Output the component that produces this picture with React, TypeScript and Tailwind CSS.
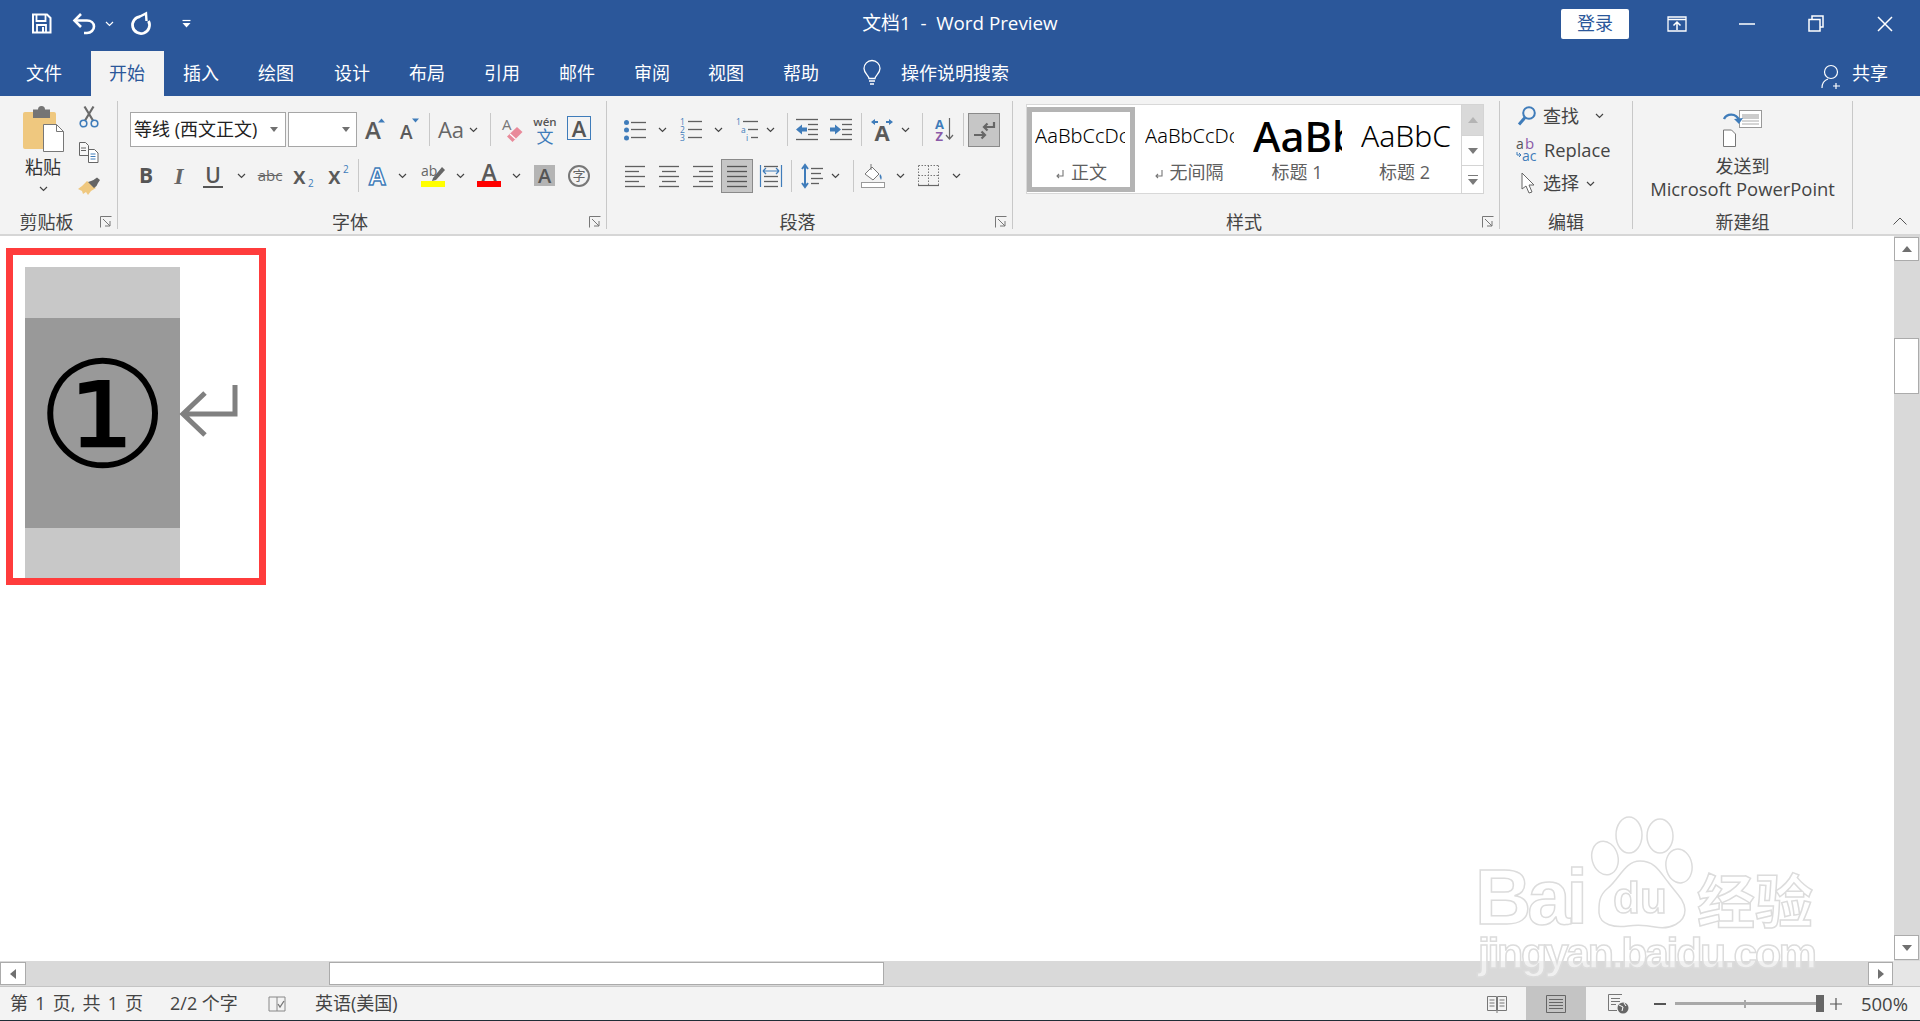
import React from "react";

const G = "#5a5a5a";
const B = "#3f7cba";
const SANS = "Open Sans, Noto Sans CJK SC, sans-serif";

function S({ c, children }: { c: string; children?: React.ReactNode }) {
  return <div className={`flex shrink-0 items-center justify-center ${c}`}>{children}</div>;
}
const Chev = ({ color = "#444" }: { color?: string }) => (
  <svg width="9" height="6" viewBox="0 0 9 6" className="shrink-0"><path d="M1 1l3.5 3.5L8 1" stroke={color} strokeWidth="1.2" fill="none" /></svg>
);
const Sep = ({ h = "h-[33px]" }: { h?: string }) => <div className={`w-px bg-[#c8c8c8] ${h}`} />;
const Caret = () => (
  <svg width="10" height="6" viewBox="0 0 10 6" className="shrink-0"><path d="M1 0h8L5 5z" fill="#707070" /></svg>
);
const Launcher = () => (
  <svg width="12" height="12" viewBox="0 0 12 12" className="shrink-0"><path d="M.5 11.5V.5h11M3 3l7 7M10 5v5H5" stroke="#777" fill="none" strokeWidth="1" /></svg>
);
function Lines({ rows, w = 22, h = 22, color = "#606060", extra }: { rows: [number, number, number][]; w?: number; h?: number; color?: string; extra?: React.ReactNode }) {
  return (
    <svg width={w} height={h} viewBox={`0 0 ${w} ${h}`} className="shrink-0">
      {rows.map(([x1, x2, y], i) => <path key={i} d={`M${x1} ${y + 0.5}H${x2}`} stroke={color} strokeWidth="1.3" />)}
      {extra}
    </svg>
  );
}

function GroupLabel({ text, launcher }: { text: string; launcher?: boolean }) {
  return (
    <div className="mt-auto -mb-[3px] flex h-[20px] items-center text-[18px] leading-[20px] text-[#444]">
      <span className="grow text-center">{text}</span>
      {launcher ? <span className="flex w-[24px] justify-end pr-[5px]"><Launcher /></span> : null}
    </div>
  );
}

function TitleBar() {
  return (
    <div className="grid h-[51px] grid-cols-[1fr_auto_1fr] items-center pb-[4px] text-white">
      <div className="flex items-center pl-[31px]">
        <svg width="21" height="21" viewBox="0 0 21 21" className="shrink-0"><path d="M2 1.500h14l3.500 3.500v14.500h-17.500z" fill="none" stroke="#fff" strokeWidth="2" /><path d="M5.500 2v6h9V2M6 19v-7h9v7" fill="none" stroke="#fff" strokeWidth="1.800" /><path d="M11 14h2v5h-2z" fill="#fff" /></svg>
        <S c="w-[22px] ml-[21px]">
          <svg width="23" height="22" viewBox="0 0 23 22"><path d="M8 1L1.500 7.500 8 14" fill="none" stroke="#fff" strokeWidth="2.600" /><path d="M2 7.500h12c4 0 7 2.500 7 6s-3 6.500-7 6.500h-3" fill="none" stroke="#fff" strokeWidth="2.600" /></svg>
        </S>
        <S c="w-[9px] ml-[10px]"><Chev color="#fff" /></S>
        <S c="w-[20px] ml-[17px]">
          <svg width="21" height="23" viewBox="0 0 21 23"><path d="M9 4.600A8.500 8.500 0 1 0 17.500 9" fill="none" stroke="#fff" strokeWidth="2.800" /><path d="M8.500 4.800L15 1.500 15.500 9" fill="none" stroke="#fff" strokeWidth="2.400" /></svg>
        </S>
        <S c="w-[9px] ml-[31px]">
          <svg width="9" height="9" viewBox="0 0 9 9"><path d="M.5 1.500h8" stroke="#fff" strokeWidth="1.200" /><path d="M.5 4h8L4.500 8.500z" fill="#fff" /></svg>
        </S>
      </div>
      <div className="whitespace-pre text-[18.8px]">文档1  -  Word Preview</div>
      <div className="flex items-center justify-end pr-[13px]">
        <div className="flex h-[30px] w-[68px] items-center justify-center rounded-[2px] bg-white text-[18px] text-[#2b579a]">登录</div>
        <S c="w-[96px]">
          <svg width="20" height="16" viewBox="0 0 20 16"><path d="M1 1h18v14H1zM1 3.500h18" fill="none" stroke="#fff" strokeWidth="1.300" /><path d="M10 14V7M6.500 9.500L10 6l3.500 3.500" fill="none" stroke="#fff" strokeWidth="1.500" /></svg>
        </S>
        <S c="w-[44px]"><svg width="16" height="2" viewBox="0 0 16 2"><path d="M0 1h16" stroke="#fff" strokeWidth="1.500" /></svg></S>
        <S c="w-[94px]">
          <svg width="16" height="17" viewBox="0 0 16 17"><path d="M1 4.500h11v11.500H1zM4 4V1h11v11h-3" fill="none" stroke="#fff" strokeWidth="1.500" /></svg>
        </S>
        <S c="w-[44px]"><svg width="16" height="16" viewBox="0 0 16 16"><path d="M1 1l14 14M15 1L1 15" stroke="#fff" strokeWidth="1.500" /></svg></S>
      </div>
    </div>
  );
}

function Tab({ c, t }: { c: string; t: string }) {
  return <S c={c}>{t}</S>;
}

function TabRow() {
  return (
    <div className="flex h-[45px] items-center text-[18px] text-white">
      <Tab c="w-[91px] pr-[3px]" t="文件" />
      <div className="flex h-[45px] w-[73px] items-center justify-center bg-[#f3f3f3] pr-[1px] text-[#2b579a]">开始</div>
      <Tab c="w-[74px]" t="插入" />
      <Tab c="w-[76px]" t="绘图" />
      <Tab c="w-[76px]" t="设计" />
      <Tab c="w-[74px]" t="布局" />
      <Tab c="w-[76px]" t="引用" />
      <Tab c="w-[74px]" t="邮件" />
      <Tab c="w-[76px]" t="审阅" />
      <Tab c="w-[72px]" t="视图" />
      <Tab c="w-[78px]" t="帮助" />
      <S c="w-[18px] ml-[23px]">
        <svg width="18" height="25" viewBox="0 0 18 25"><path d="M6 17.500c0-3-5-5-5-10a8 8 0 0 1 16 0c0 5-5 7-5 10z" fill="none" stroke="#fff" strokeWidth="1.300" /><path d="M6 20h6M7 23h4" stroke="#fff" strokeWidth="1.600" /></svg>
      </S>
      <div className="ml-[20px]">操作说明搜索</div>
      <div className="ml-auto flex items-center pr-[32px]">
        <svg width="22" height="25" viewBox="0 0 22 25" className="mt-[5px] mr-[9px] shrink-0"><circle cx="10" cy="8" r="6.500" fill="none" stroke="#fff" strokeWidth="1.200" /><path d="M1 24c0-5 3-8 6-9M15 19v6M12 22h7" fill="none" stroke="#fff" strokeWidth="1.200" /></svg>
        <span>共享</span>
      </div>
    </div>
  );
}

const ClipboardGroup = () => (
  <div className="flex h-[128px] w-[118px] shrink-0 flex-col border-r border-[#c8c8c8]">
    <div className="flex h-[103px]">
      <div className="ml-[8px] flex w-[70px] flex-col items-center pt-[6px]">
        <svg width="41" height="45" viewBox="0 0 41 45" className="shrink-0">
          <rect x="0" y="5" width="33" height="37" rx="2" fill="#efc87f" />
          <path d="M15 2.500a3.500 3.500 0 0 1 7 0h5v8.500H10V2.500z" fill="#757575" />
          <path d="M20.500 17.500h13l7 7v20h-20z" fill="#fff" stroke="#777" strokeWidth="1" />
          <path d="M33.500 17.500v7h7" fill="none" stroke="#777" strokeWidth="1" />
        </svg>
        <div className="mt-[3px] h-[25px] text-[18px] leading-[25px] text-[#333]">粘贴</div>
        <div className="mt-[6px]"><Chev /></div>
      </div>
      <div className="flex w-[22px] flex-col items-center pt-[5px]">
        <svg width="20" height="22" viewBox="0 0 20 22" className="shrink-0"><path d="M14.500 0.500L6 14.500M5.500 0.500L14 14.500" stroke="#6a6a6a" strokeWidth="2.200" /><circle cx="4.500" cy="17.500" r="3.300" fill="none" stroke={B} strokeWidth="1.600" /><circle cx="15.500" cy="17.500" r="3.300" fill="none" stroke={B} strokeWidth="1.600" /></svg>
        <svg width="20" height="21" viewBox="0 0 20 21" className="mt-[14px] shrink-0"><path d="M.5.500h6l3 3v10h-9z" fill="#f8f8f8" stroke="#666" /><path d="M2 6h5M2 8.500h5" stroke="#666" /><path d="M9.500 7.500h6l3.500 3.500v9.500h-9.500z" fill="#fff" stroke="#666" /><path d="M11.500 12h5M11.500 14.500h5M11.500 17h5" stroke={B} /></svg>
        <svg width="23" height="20" viewBox="0 0 23 20" className="mt-[14px] shrink-0"><path d="M9 4l9 7-5 3-3 4-2-3-3 2-1-3-4-2 4-3z" fill="#efc87f" /><path d="M10 5l3-1 2.500-1L19 .5l3 2.500-2 3-1.500 3-2.500 2z" fill="#646464" /></svg>
      </div>
    </div>
    <GroupLabel text="剪贴板" launcher />
  </div>
);

const FontGroup = () => (
  <div className="flex h-[128px] w-[489px] shrink-0 flex-col border-r border-[#c8c8c8]">
    <div className="mt-[11px] flex h-[35px] pl-[12px]">
      <div className="flex h-[35px] w-[156px] items-center border border-[#a6a6a6] bg-white pl-[3px] pr-[6px] text-[18px] text-[#222]">
        <span className="grow whitespace-nowrap">等线 (西文正文)</span><Caret />
      </div>
      <div className="ml-[2px] flex h-[35px] w-[69px] items-center justify-end border border-[#a6a6a6] bg-white pr-[5px]"><Caret /></div>
      <S c="w-[34px]">
        <svg width="30" height="30" viewBox="0 0 30 30"><text x="6" y="23.500" fontSize="24" fontWeight="600" fontFamily={SANS} fill={G}>A</text><path d="M19 7.500l3.500-4 3.500 4z" fill={B} /></svg>
      </S>
      <S c="w-[32px]">
        <svg width="26" height="30" viewBox="0 0 26 30"><text x="6" y="23.500" fontSize="19" fontWeight="600" fontFamily={SANS} fill={G}>A</text><path d="M18 3.500h7L21.500 7.500z" fill={B} /></svg>
      </S>
      <S c="w-[12px]"><Sep /></S>
      <S c="w-[32px] text-[22px] text-[#666]">Aa</S>
      <S c="w-[12px]"><Chev /></S>
      <S c="w-[22px]"><Sep /></S>
      <S c="w-[22px]">
        <svg width="22" height="26" viewBox="0 0 22 26"><text x="1" y="13" fontSize="15" fontFamily={SANS} fill="#777">A</text><path d="M6 19.500l10-9.500 5.500 5-10 10z" fill="#e98a9a" /><path d="M9 17l5.500 5" stroke="#fff" strokeWidth="1.200" /></svg>
      </S>
      <S c="w-[44px]">
        <svg width="24" height="28" viewBox="0 0 24 28"><text x="12" y="10" textAnchor="middle" fontSize="11.500" fontWeight="600" fontFamily={SANS} fill="#555">wén</text><text x="12" y="27" textAnchor="middle" fontSize="17" fontFamily="Noto Sans CJK SC" fill={B}>文</text></svg>
      </S>
      <div className="mt-[4px] flex h-[24px] w-[24px] items-center justify-center border border-[#3f7cba] text-[22px] font-semibold leading-none text-[#555]">A</div>
    </div>
    <div className="mt-[11px] flex h-[35px] pl-[12px] text-[#555]">
      <S c="w-[32px] text-[21px] font-bold">B</S>
      <S c="w-[34px] font-['Liberation_Serif',serif] text-[24px] font-bold italic text-[#666]">I</S>
      <S c="w-[34px] flex-col text-[21px] font-semibold leading-[22px]"><span className="border-b-[2px] border-[#555] px-[2px]">U</span></S>
      <S c="w-[22px]"><Chev /></S>
      <S c="w-[36px] text-[15px] text-[#666] line-through">abc</S>
      <S c="w-[34px]"><svg width="24" height="24" viewBox="0 0 24 24"><text x="0" y="20" fontSize="23" fontWeight="600" fontFamily={SANS} fill={G}>x</text><text x="15" y="23" fontSize="10" fontFamily={SANS} fill={B}>2</text></svg></S>
      <S c="w-[28px] ml-[4px]"><svg width="24" height="24" viewBox="0 0 24 24"><text x="0" y="20" fontSize="23" fontWeight="600" fontFamily={SANS} fill={G}>x</text><text x="15" y="9" fontSize="10" fontFamily={SANS} fill={B}>2</text></svg></S>
      <S c="w-[8px]"><Sep /></S>
      <S c="w-[32px]"><svg width="24" height="26" viewBox="0 0 24 26"><text x="3" y="22" fontSize="24" fontWeight="700" fontFamily={SANS} fill="#fff" stroke={B} strokeWidth="1.400">A</text></svg></S>
      <S c="w-[16px]"><Chev /></S>
      <S c="w-[24px] ml-[11px]"><svg width="24" height="26" viewBox="0 0 24 26"><text x="0" y="13" fontSize="14" fontFamily={SANS} fill="#666">ab</text><path d="M12 15l9-11 3 3-9 10-4 1z" fill="#666" /><rect x="0" y="18" width="24" height="6" fill="#ffff00" /></svg></S>
      <S c="w-[16px] ml-[7px]"><Chev /></S>
      <S c="w-[24px] ml-[9px]"><svg width="24" height="26" viewBox="0 0 24 26"><text x="12" y="18" textAnchor="middle" fontSize="23" fontWeight="600" fontFamily={SANS} fill={G}>A</text><rect x="0" y="18" width="24" height="6" fill="#ff0000" /></svg></S>
      <S c="w-[16px] ml-[7px]"><Chev /></S>
      <S c="ml-[10px] w-[21px]"><div className="flex h-[21px] w-[21px] items-center justify-center bg-[#b4b4b4] text-[20px] font-semibold leading-none text-[#555]">A</div></S>
      <S c="ml-[13px] w-[22px]"><div className="flex h-[22px] w-[22px] items-center justify-center rounded-full border-[2px] border-[#777] text-[13px] leading-none text-[#666]">字</div></S>
    </div>
    <GroupLabel text="字体" launcher />
  </div>
);

const Bul = (
  <Lines w={22} h={22} rows={[[7, 22, 3], [7, 22, 10], [7, 22, 18]]} extra={<g fill={B}><circle cx="2.500" cy="3.500" r="2.500" /><circle cx="2.500" cy="11" r="2.500" /><circle cx="2.500" cy="19" r="2.500" /></g>} />
);
const NumT = ({ x, y, t }: { x: number; y: number; t: string }) => <text x={x} y={y} fontSize="8.500" fontFamily={SANS} fill={B}>{t}</text>;

const ParaGroup = () => (
  <div className="flex h-[128px] w-[406px] shrink-0 flex-col border-r border-[#c8c8c8]">
    <div className="mt-[11px] flex h-[35px] items-center pl-[17px]">
      <S c="w-[22px]">{Bul}</S>
      <S c="ml-[10px] w-[12px]"><Chev /></S>
      <S c="ml-[12px] w-[22px]"><Lines w={22} h={24} rows={[[8, 22, 3], [8, 22, 11], [8, 22, 19]]} extra={<><NumT x={0} y={7} t="1" /><NumT x={0} y={15} t="2" /><NumT x={0} y={23} t="3" /></>} /></S>
      <S c="ml-[10px] w-[12px]"><Chev /></S>
      <S c="ml-[12px] w-[22px]"><Lines w={22} h={24} rows={[[7, 22, 3], [12, 22, 11], [15, 22, 19]]} extra={<><NumT x={0} y={7} t="1" /><NumT x={5} y={15} t="a" /><NumT x={10} y={23} t="i" /></>} /></S>
      <S c="ml-[6px] w-[12px]"><Chev /></S>
      <S c="ml-[10px] w-[2px]"><Sep /></S>
      <S c="ml-[8px] w-[22px]"><Lines w={22} h={23} rows={[[0, 22, 1], [12, 22, 6], [12, 22, 11], [12, 22, 16], [0, 22, 21]]} extra={<path d="M0 11.500l6-5v3h5v4H6v3z" fill={B} />} /></S>
      <S c="ml-[12px] w-[22px]"><Lines w={22} h={23} rows={[[0, 22, 1], [12, 22, 6], [12, 22, 11], [12, 22, 16], [0, 22, 21]]} extra={<path d="M11 11.500l-6-5v3H0v4h5v3z" fill={B} />} /></S>
      <S c="ml-[8px] w-[2px]"><Sep /></S>
      <S c="ml-[9px] w-[22px]"><svg width="22" height="24" viewBox="0 0 22 24"><text x="11" y="23" textAnchor="middle" fontSize="22" fontWeight="700" fontFamily={SANS} fill={G}>A</text><path d="M0 4l4-3v2h3v2H4v2zM22 4l-4-3v2h-3v2h3v2z" fill={B} /></svg></S>
      <S c="ml-[6px] w-[12px]"><Chev /></S>
      <S c="ml-[10px] w-[2px]"><Sep /></S>
      <S c="ml-[12px] w-[18px]"><svg width="19" height="24" viewBox="0 0 19 24"><text x="0" y="11" fontSize="13" fontWeight="700" fontFamily={SANS} fill={B}>A</text><text x="0.500" y="23" fontSize="13" fontWeight="700" fontFamily={SANS} fill="#8a5aa8">Z</text><path d="M14.500 0v21M11 17l3.500 4 3.500-4" fill="none" stroke="#666" strokeWidth="1.200" /></svg></S>
      <S c="ml-[9px] w-[2px]"><Sep /></S>
      <S c="ml-[4px] h-[34px] w-[32px] border border-[#8a8a8a] bg-[#c6c6c6]">
        <svg width="26" height="22" viewBox="0 0 26 22"><path d="M23 3v5H13M16.500 4.500L13 8l3.500 3.500" fill="none" stroke="#666" strokeWidth="2.200" /><path d="M3 16h11M10.500 12.500L14 16l-3.500 3.500" fill="none" stroke="#666" strokeWidth="2.200" /></svg>
      </S>
    </div>
    <div className="mt-[11px] flex h-[35px] items-center pl-[18px]">
      <S c="w-[20px]"><Lines w={20} h={22} rows={[[0, 20, 1], [0, 14, 6], [0, 20, 11], [0, 14, 16], [0, 20, 21]]} /></S>
      <S c="ml-[14px] w-[20px]"><Lines w={20} h={22} rows={[[0, 20, 1], [3, 17, 6], [0, 20, 11], [3, 17, 16], [0, 20, 21]]} /></S>
      <S c="ml-[14px] w-[20px]"><Lines w={20} h={22} rows={[[0, 20, 1], [6, 20, 6], [0, 20, 11], [6, 20, 16], [0, 20, 21]]} /></S>
      <S c="ml-[8px] h-[34px] w-[32px] border border-[#8a8a8a] bg-[#c6c6c6]"><Lines w={20} h={22} color="#555" rows={[[0, 20, 1], [0, 20, 6], [0, 20, 11], [0, 20, 16], [0, 20, 21]]} /></S>
      <S c="ml-[7px] w-[22px]"><Lines w={22} h={22} rows={[[4, 18, 1], [4, 18, 11], [4, 18, 16], [4, 18, 21]]} extra={<path d="M.500 0v22M21.500 0v22M3 6h16M3 6l3-3M3 6l3 3M19 6l-3-3M19 6l-3 3" fill="none" stroke={B} strokeWidth="1.200" />} /></S>
      <S c="ml-[8px] w-[2px]"><Sep h="h-[32px]" /></S>
      <S c="ml-[9px] w-[22px]"><Lines w={22} h={24} rows={[[10, 22, 4], [10, 20, 9], [10, 22, 14], [10, 18, 19]]} extra={<path d="M4 1v22M1 5l3-4 3 4M1 19l3 4 3-4" fill="none" stroke={B} strokeWidth="2" />} /></S>
      <S c="ml-[6px] w-[12px]"><Chev /></S>
      <S c="ml-[11px] w-[2px]"><Sep h="h-[32px]" /></S>
      <S c="ml-[7px] w-[24px]"><svg width="24" height="26" viewBox="0 0 24 26"><path d="M4 11L11 4l7 7-6 6z" fill="#fff" stroke="#777" /><path d="M10 1v6" stroke="#777" /><path d="M19 11c2 2 2 4 1 6-1-2-2-4-1-6z" fill={B} /><rect x=".500" y="19.500" width="23" height="5" fill="#fff" stroke="#999" /></svg></S>
      <S c="ml-[9px] w-[12px]"><Chev /></S>
      <S c="ml-[12px] w-[21px]"><svg width="21" height="21" viewBox="0 0 21 21"><path d="M.5.5h20M.5.5v20M20.500.5v20M10.500.5v20M.5 10.500h20" stroke="#777" strokeDasharray="1.500 1.500" fill="none" /><path d="M0 20.500h21" stroke="#666" strokeWidth="1.200" /></svg></S>
      <S c="ml-[11px] w-[12px]"><Chev /></S>
    </div>
    <GroupLabel text="段落" launcher />
  </div>
);

const Ret = () => (
  <svg width="10" height="10" viewBox="0 0 10 10" className="mr-[6px] mt-[3px] shrink-0"><path d="M8 1v6H2M4 5L2 7l2 2" fill="none" stroke="#777" strokeWidth="1.100" /></svg>
);
const StyleLabel = ({ t, ret }: { t: string; ret?: boolean }) => (
  <div className="mt-[1px] flex h-[24px] items-center justify-center text-[18px] leading-[24px] text-[#606060]">{ret ? <Ret /> : null}{t}</div>
);
const Tri = ({ up, color }: { up?: boolean; color: string }) => (
  <svg width="10" height="6" viewBox="0 0 10 6"><path d={up ? "M0 6h10L5 0z" : "M0 0h10L5 6z"} fill={color} /></svg>
);

const StylesGroup = () => (
  <div className="flex h-[128px] w-[487px] shrink-0 flex-col border-r border-[#c8c8c8]">
    <div className="ml-[13px] mt-[3px] flex h-[90px] w-[458px]">
      <div className="flex h-[90px] w-[435px] border-y border-l border-[#d8d8d8] bg-white font-['Noto_Sans',sans-serif]">
        <div className="mt-[2px] flex h-[85px] w-[108px] shrink-0 flex-col border-[5px] border-[#b4b4b4] bg-white">
          <div className="mx-[3px] mt-[1px] h-[46px] w-[90px] overflow-hidden whitespace-nowrap text-[20px] font-light leading-[46px] text-black">AaBbCcDc</div>
          <div className="font-['Open_Sans','Noto_Sans_CJK_SC',sans-serif]"><StyleLabel t="正文" ret /></div>
        </div>
        <div className="mt-[2px] flex h-[85px] w-[109px] shrink-0 flex-col pl-[10px]">
          <div className="mt-[6px] h-[46px] w-[89px] overflow-hidden whitespace-nowrap text-[20px] font-light leading-[46px] text-black">AaBbCcDc</div>
          <div className="pr-[12px] font-['Open_Sans','Noto_Sans_CJK_SC',sans-serif]"><StyleLabel t="无间隔" ret /></div>
        </div>
        <div className="mt-[2px] flex h-[85px] w-[109px] shrink-0 flex-col pl-[9px]">
          <div className="mt-[5px] h-[47px] w-[89px] overflow-hidden whitespace-nowrap text-[42px] font-medium leading-[47px] text-black">AaBbCcDc</div>
          <div className="pr-[12px] font-['Open_Sans','Noto_Sans_CJK_SC',sans-serif]"><StyleLabel t="标题 1" /></div>
        </div>
        <div className="mt-[2px] flex h-[85px] w-[109px] shrink-0 flex-col pl-[8px]">
          <div className="mt-[6px] h-[46px] w-[91px] overflow-hidden whitespace-nowrap text-[30px] font-light leading-[46px] text-black">AaBbCcDc</div>
          <div className="pr-[14px] font-['Open_Sans','Noto_Sans_CJK_SC',sans-serif]"><StyleLabel t="标题 2" /></div>
        </div>
      </div>
      <div className="flex w-[23px] flex-col">
        <S c="h-[32px] border border-[#d4d4d4] bg-[#d9d9d9]"><Tri up color="#b4b4b4" /></S>
        <S c="h-[29px] border-x border-[#d4d4d4] bg-white"><Tri color="#7a7a7a" /></S>
        <S c="h-[29px] flex-col gap-[3px] border border-[#d4d4d4] bg-white"><div className="h-[1px] w-[10px] bg-[#7a7a7a]" /><Tri color="#7a7a7a" /></S>
      </div>
    </div>
    <GroupLabel text="样式" launcher />
  </div>
);

const EditGroup = () => (
  <div className="flex h-[128px] w-[133px] shrink-0 flex-col border-r border-[#c8c8c8] text-[18px] text-[#444]">
    <div className="-mt-[2px] flex h-[34px] items-center pl-[18px]">
      <svg width="18" height="20" viewBox="0 0 18 20" className="shrink-0"><circle cx="11" cy="7" r="5.800" fill="none" stroke={B} strokeWidth="2" /><path d="M7 11.500L1 18.500" stroke={B} strokeWidth="3" /></svg>
      <span className="ml-[7px]">查找</span>
      <span className="ml-[16px] flex"><Chev /></span>
    </div>
    <div className="flex h-[34px] items-center pl-[16px]">
      <svg width="22" height="24" viewBox="0 0 22 24" className="shrink-0"><text x="0" y="11" fontSize="14" fontFamily={SANS} fill="#555">a</text><text x="9" y="11" fontSize="15" fontFamily={SANS} fill="#8a5aa8">b</text><text x="6" y="23" fontSize="14" fontFamily={SANS} fill={B}>ac</text><path d="M1 14v3h4M3 15l2 2-2 2" fill="none" stroke={B} strokeWidth="1" /></svg>
      <span className="ml-[6px] text-[18.3px]">Replace</span>
    </div>
    <div className="flex h-[33px] items-center pl-[21px]">
      <svg width="15" height="23" viewBox="0 0 15 23" className="shrink-0"><path d="M1 1v16l4-3 3 7 3-1-3-7h5z" fill="#fff" stroke="#666" strokeWidth="1" /></svg>
      <span className="ml-[7px]">选择</span>
      <span className="ml-[7px] flex"><Chev /></span>
    </div>
    <GroupLabel text="编辑" />
  </div>
);

const NewGroup = () => (
  <div className="flex h-[128px] w-[220px] shrink-0 flex-col border-r border-[#c8c8c8] text-[18px] text-[#444]">
    <div className="flex h-[103px] flex-col items-center pt-[9px] leading-[22px]">
      <svg width="39" height="37" viewBox="0 0 39 37" className="shrink-0">
        <rect x="16.500" y=".5" width="22" height="17" fill="#fff" stroke="#999" /><rect x="19" y="4" width="17" height="5" fill="#ccc" /><path d="M19 11h17M19 14h17" stroke="#aaa" />
        <path d="M.5 20h8l4 4v12.500H.5z" fill="#fff" stroke="#777" />
        <path d="M1 9c3-6 12-6 15 1" fill="none" stroke={B} strokeWidth="2.400" /><path d="M11 9l5 5 4-6z" fill={B} />
      </svg>
      <div className="mt-[8px]">发送到</div>
      <div className="mt-[1px] whitespace-nowrap text-[18.4px]">Microsoft PowerPoint</div>
    </div>
    <GroupLabel text="新建组" />
  </div>
);

const Ribbon = () => (
  <div className="flex h-[140px] border-b-[2px] border-[#d6d6d6] bg-[#f3f3f3]">
    <div className="mt-[5px] flex h-[128px]">
      <ClipboardGroup />
      <FontGroup />
      <ParaGroup />
      <StylesGroup />
      <EditGroup />
      <NewGroup />
    </div>
    <div className="ml-auto mr-[13px] mt-[121px]">
      <svg width="14" height="8" viewBox="0 0 14 8"><path d="M.5 7.500L7 1l6.500 6.500" fill="none" stroke="#555" strokeWidth="1" /></svg>
    </div>
  </div>
);

const ScrollBtn = ({ c, children }: { c: string; children: React.ReactNode }) => (
  <div className={`flex shrink-0 items-center justify-center border border-[#ababab] bg-white ${c}`}>{children}</div>
);

const Document = () => (
  <div className="flex h-[725px]">
    <div className="grow bg-white pl-[6px] pt-[12px]">
      <div className="flex h-[337px] w-[260px] border-[7px] border-[#ff3c3c] bg-white pl-[12px] pt-[12px]">
        <div className="flex h-[311px] w-[155px] flex-col bg-[#c8c8c8]">
          <div className="mt-[51px] flex h-[210px] items-center justify-center bg-[#999] pb-[14px] font-['DejaVu_Sans','Noto_Sans_CJK_SC',sans-serif] text-[148px] leading-none text-black">①</div>
        </div>
        <svg width="60" height="54" viewBox="0 0 60 54" className="mt-[118px] shrink-0">
          <path d="M55 0v29H3M25 8L3 29l22 21" fill="none" stroke="#808080" strokeWidth="5" />
        </svg>
      </div>
    </div>
    <div className="flex w-[26px] flex-col bg-[#d9d9d9] pt-[1px]">
      <ScrollBtn c="h-[24px] w-[25px]"><Tri up color="#707070" /></ScrollBtn>
      <div className="mt-[77px] h-[56px] w-[25px] border border-[#ababab] bg-white" />
      <ScrollBtn c="mt-[541px] h-[25px] w-[25px]"><Tri color="#707070" /></ScrollBtn>
    </div>
  </div>
);

const HScroll = () => (
  <div className="flex h-[25px] items-center bg-[#e6e6e6]">
    <div className="flex h-[25px] w-[1893px] items-center bg-[#d9d9d9]">
      <ScrollBtn c="h-[23px] w-[26px]"><svg width="6" height="10" viewBox="0 0 6 10"><path d="M6 0v10L0 5z" fill="#707070" /></svg></ScrollBtn>
      <div className="ml-[303px] h-[23px] w-[555px] border border-[#ababab] bg-white" />
      <ScrollBtn c="ml-[984px] h-[23px] w-[25px]"><svg width="6" height="10" viewBox="0 0 6 10"><path d="M0 0v10l6-5z" fill="#707070" /></svg></ScrollBtn>
    </div>
  </div>
);

const StatusBar = () => (
  <div className="flex h-[35px] items-center border-y border-t-[#c4c4c4] border-b-[#1f2d36] bg-[#f3f3f3] text-[18px] text-[#444]">
    <span className="ml-[10px] w-[160px] whitespace-pre [word-spacing:2.500px]">第 1 页, 共 1 页</span>
    <span className="w-[98px] whitespace-pre">2/2 个字</span>
    <svg width="18" height="18" viewBox="0 0 18 18" className="shrink-0"><path d="M9 2H1v14h8v-14h8v14H9" fill="none" stroke="#888" /><path d="M10 9l2 3 4-6" fill="none" stroke="#777" strokeWidth="1.300" /></svg>
    <span className="ml-[29px] whitespace-nowrap">英语(美国)</span>
    <div className="ml-auto flex h-full items-center pr-[12px]">
      <svg width="20" height="18" viewBox="0 0 20 18" className="shrink-0"><path d="M.5 1.500h9v14h-9zM10.500 1.500h9v14h-9z" fill="none" stroke="#777" /><path d="M2.500 5h5M2.500 8h5M2.500 11h5M12.500 5h5M12.500 8h5M12.500 11h5M10 15v3" stroke="#777" /></svg>
      <S c="ml-[19px] h-full w-[60px] bg-[#c4c4c4]">
        <svg width="20" height="18" viewBox="0 0 20 18"><path d="M.5.5h19v17H.5z" fill="none" stroke="#666" /><path d="M3 4.500h14M3 7.500h14M3 10.500h14M3 13.500h14" stroke="#666" /></svg>
      </S>
      <svg width="21" height="20" viewBox="0 0 21 20" className="ml-[22px] shrink-0"><path d="M14 .5H.5v16H9" fill="none" stroke="#777" /><path d="M3 4.500h9M3 7.500h9M3 10.500h5" stroke="#777" /><circle cx="15" cy="14" r="5.500" fill="#666" /><path d="M11 11l4 2-1 4M16 9l2 3" stroke="#fff" fill="none" /></svg>
      <div className="ml-[25px] h-[2px] w-[12px] bg-[#555]" />
      <div className="ml-[9px] flex items-center">
        <div className="flex h-[3px] w-[141px] items-center justify-center bg-[#a8a8a8]"><div className="h-[8px] w-[2px] bg-[#a8a8a8]" /></div>
        <div className="h-[17px] w-[8px] bg-[#666]" />
      </div>
      <svg width="12" height="12" viewBox="0 0 12 12" className="ml-[6px] shrink-0"><path d="M0 6h12M6 0v12" stroke="#555" strokeWidth="1.200" /></svg>
      <span className="ml-[19px] text-[18.5px]">500%</span>
    </div>
  </div>
);

const Watermark = () => (
  <svg width="360" height="180" viewBox="0 0 360 180" className="absolute left-[1470px] top-[810px] blur-[0.4px]">
    <g fill="#ffffff" fillOpacity="0.6" stroke="#dcdcdc" strokeWidth="1.500">
      <ellipse cx="135" cy="48" rx="13" ry="17" transform="rotate(-15 135 48)" />
      <ellipse cx="159" cy="25" rx="13" ry="18" />
      <ellipse cx="190" cy="26" rx="13" ry="17" />
      <ellipse cx="209" cy="56" rx="13" ry="17" transform="rotate(-10 209 56)" />
      <path d="M170 51C155 51 150 68 138 78C128 86 129 95 129 103C130 115 145 118 158 116C165 115 175 115 185 117C200 120 215 113 215 100C215 90 205 82 198 72C190 62 185 51 170 51Z" />
      <text x="5" y="114" fontSize="78" fontWeight="700" fontFamily="Liberation Sans, sans-serif" textLength="113">Bai</text>
      <text x="143" y="103" fontSize="44" fontWeight="700" fontFamily="Liberation Sans, sans-serif" textLength="54">du</text>
      <text x="227" y="113" fontSize="58" fontWeight="700" fontFamily="Noto Sans CJK SC, sans-serif">经验</text>
      <text x="8" y="158" fontSize="43" fontWeight="700" fontFamily="Liberation Sans, sans-serif" textLength="339">jingyan.baidu.com</text>
    </g>
  </svg>
);

export default function App() {
  return (
    <div className="relative flex h-[1021px] w-[1920px] flex-col overflow-hidden bg-white font-['Open_Sans','Noto_Sans_CJK_SC',sans-serif] [&_svg]:overflow-visible">
      <div className="h-[96px] bg-[#2b579a]">
        <TitleBar />
        <TabRow />
      </div>
      <Ribbon />
      <Document />
      <HScroll />
      <StatusBar />
      <Watermark />
    </div>
  );
}
